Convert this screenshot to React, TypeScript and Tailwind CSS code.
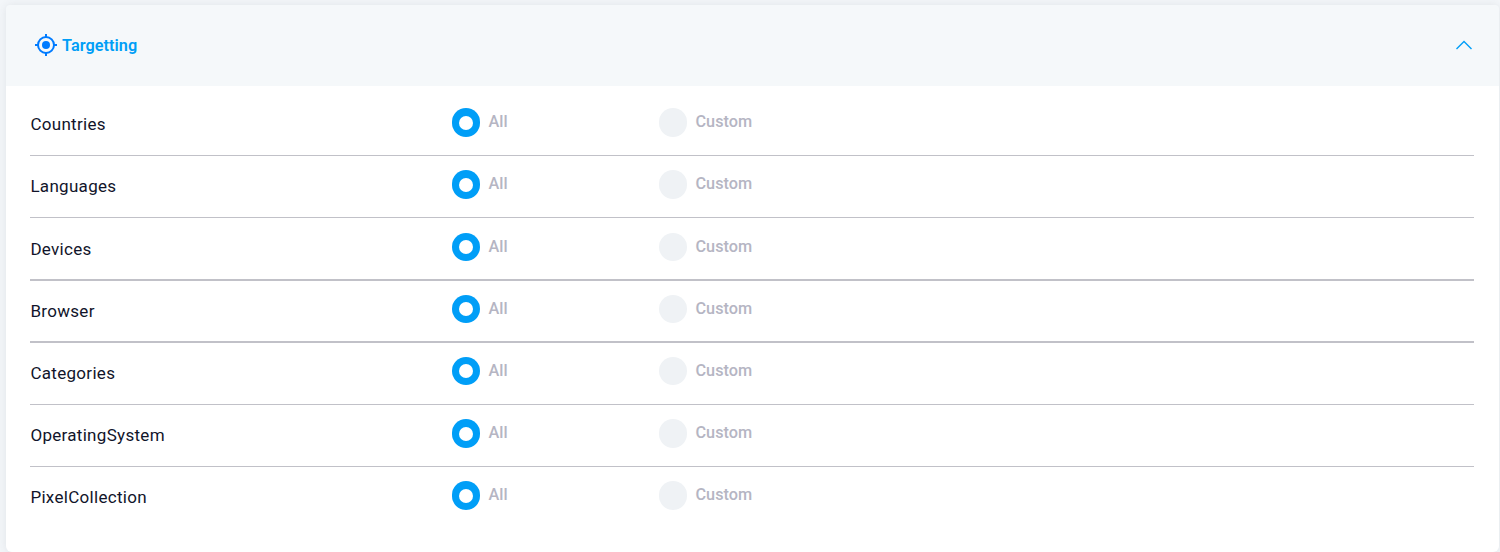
const rows = [
  { name: 'Countries', row: 'h-[62px] border-b', dot: 'h-[28.5px]', inner: 'mt-px' },
  { name: 'Languages', row: 'h-[62px] border-b', dot: 'h-[28.5px]', inner: 'mt-px' },
  { name: 'Devices', row: 'h-[63px] border-b-2 pt-[15px]', dot: 'h-7', inner: '' },
  { name: 'Browser', row: 'h-[62px] border-b-2', dot: 'h-7', inner: '' },
  { name: 'Categories', row: 'h-[62px] border-b', dot: 'h-7', inner: '' },
  { name: 'OperatingSystem', row: 'h-[62px] border-b', dot: 'h-[28.5px]', inner: 'mt-px' },
  { name: 'PixelCollection', row: 'h-[62px]', dot: 'h-[28.5px]', inner: 'mt-px' },
];

function Radio({ label, checked, dot, inner }: { label: string; checked?: boolean; dot: string; inner: string }) {
  return (
    <label className="flex w-[207px] items-start">
      <span className={`flex ${dot} w-7 items-center justify-center rounded-full ${checked ? 'bg-[#009ef7]' : 'bg-[#eff2f5]'}`}>
        {checked && <span className={`${inner} size-3.5 rounded-full bg-white`} />}
      </span>
      <span className="ml-[8.500px] pt-[2px] text-[16.250px] leading-6 font-medium text-[#b5b5c3]">{label}</span>
    </label>
  );
}

export default function App() {
  return (
    <div className="h-[552px] overflow-hidden bg-[#f3f6f9] pt-[5px] pr-px pl-[6px] font-[Roboto,sans-serif]">
      <div className="h-[547px] rounded-md bg-white shadow-[0_0_10px_rgba(60,70,80,0.1)]">
        <header className="flex h-[81px] items-center justify-between rounded-t-sm bg-[#f5f8fa] pr-[27px] pl-7">
          <div className="flex items-center gap-1 text-[#009ef7]">
            <svg className="-mt-px size-6" viewBox="0 0 24 24" fill="none" stroke="#007bff" strokeWidth="2">
              <circle cx="12" cy="12" r="8" />
              <circle cx="12" cy="12" r="4" fill="#007bff" stroke="none" />
              <path d="M12 1v3M12 20v3M1 12h3M20 12h3" />
            </svg>
            <h1 className="text-[16.250px] leading-6 font-semibold tracking-[0.05px]">Targetting</h1>
          </div>
          <svg className="-mt-0.5 h-4 w-4" viewBox="0 0 16 16" fill="none" stroke="#009ef7" strokeWidth="1.400"><path d="M.5 12 8 4.500l7.500 7.500" /></svg>
        </header>
        <main className="pt-2 pr-[25px] pl-6">
          {rows.map((r) => (
            <div key={r.name} className={`${r.row} flex items-start border-[#c1c1c8] pt-[14px]`}>
              <div className="w-[422px] pt-1 pl-[0.4px] text-[17px] leading-6 font-[450] tracking-[0.3px] text-[#11142a]">{r.name}</div>
              <Radio label="All" checked dot={r.dot} inner={r.inner} />
              <Radio label="Custom" dot={r.dot} inner={r.inner} />
            </div>
          ))}
        </main>
      </div>
    </div>
  );
}
